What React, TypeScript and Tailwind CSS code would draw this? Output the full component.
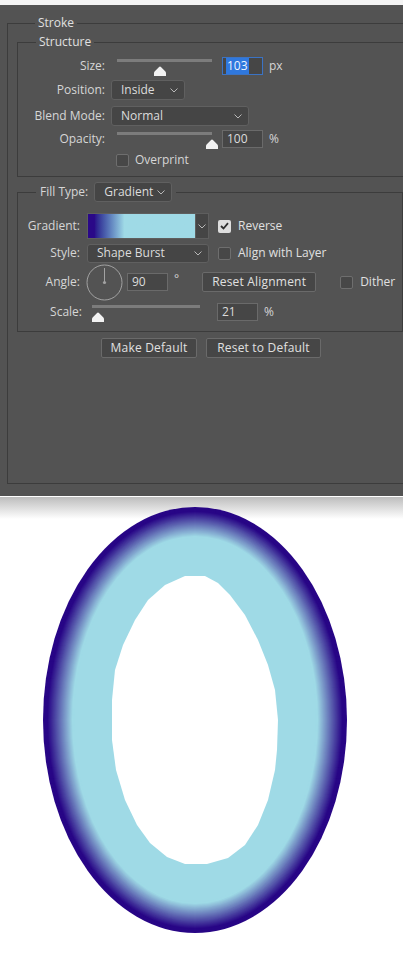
import React from 'react';

const font = "font-['Open_Sans',sans-serif]";

function Chevron() {
  return (
    <svg width="8" height="5" viewBox="0 0 8 5" className="shrink-0">
      <path d="M0.5 0.5 L4 4 L7.5 0.5" fill="none" stroke="#b8b8b8" strokeWidth="1" />
    </svg>
  );
}

function Thumb() {
  return (
    <svg width="12" height="10" viewBox="0 0 12 10">
      <path d="M6 0.5 Q6.6 0.5 7.2 1.2 L11.4 5.6 Q12 6.3 12 7.2 V10 H0 V7.2 Q0 6.3 0.6 5.6 L4.8 1.2 Q5.4 0.5 6 0.5 Z" fill="#f2f2f2" />
    </svg>
  );
}

function Slider({ width, pct }: { width: number; pct: number }) {
  return (
    <div className="relative h-[18px] shrink-0" style={{ width }}>
      <div className="mt-[4px] h-[3px] bg-[#7c7c7c]" />
      <div className="absolute top-[7px]" style={{ left: pct * width - 6 }}>
        <Thumb />
      </div>
    </div>
  );
}

function Select({ value, width, height = 20 }: { value: string; width: number; height?: number }) {
  return (
    <div
      className="flex items-center justify-between pl-[9px] pr-[6px] bg-[#454545] border border-[#606060] rounded-[3px] text-[#dcdcdc] shrink-0"
      style={{ width, height }}
    >
      <span>{value}</span>
      <Chevron />
    </div>
  );
}

function Field({ value, width = 41 }: { value: string; width?: number }) {
  return (
    <div
      className="flex items-center h-[18px] pl-[4px] bg-[#464646] border border-[#6a6a6a] text-[#dcdcdc] shrink-0"
      style={{ width }}
    >
      {value}
    </div>
  );
}

function Check({ checked = false }: { checked?: boolean }) {
  return checked ? (
    <div className="w-[13px] h-[13px] rounded-[2px] bg-[#dedede] flex items-center justify-center shrink-0">
      <svg width="9" height="8" viewBox="0 0 9 8">
        <path d="M1 4 L3.5 6.5 L8 1.2" fill="none" stroke="#2f2f2f" strokeWidth="1.8" />
      </svg>
    </div>
  ) : (
    <div className="w-[13px] h-[13px] rounded-[2px] bg-[#474747] border border-[#6e6e6e] shrink-0" />
  );
}

function Button({ label, width }: { label: string; width: number }) {
  return (
    <div
      className="flex items-center justify-center h-[20px] bg-[#464646] border border-[#6a6a6a] rounded-[2px] text-[#e0e0e0] tracking-[0.2px] shrink-0"
      style={{ width }}
    >
      {label}
    </div>
  );
}

function Dial() {
  return (
    <svg width="37" height="37" viewBox="0 0 37 37" className="shrink-0">
      <circle cx="18.5" cy="18.5" r="17.5" fill="none" stroke="#a2a2a2" strokeWidth="1" />
      <line x1="18.5" y1="18.5" x2="18.5" y2="4" stroke="#a2a2a2" strokeWidth="1" />
      <circle cx="18.5" cy="18.5" r="1.6" fill="#a2a2a2" />
    </svg>
  );
}

const dark = [40, 6, 134];
const light = [159, 218, 230];

function mix(t: number) {
  const c = dark.map((d, i) => Math.round(d + (light[i] - d) * t));
  return `rgb(${c[0]},${c[1]},${c[2]})`;
}

function Ring() {
  const steps = Array.from({ length: 32 }, (_, i) => i);
  const hole =
    'M185 80 L205 80 L218 87 L230 99 L245 119 L258 144 L268 169 L275 194 L278 224 L277 254 L275 274 L268 304 L258 329 L245 349 L228 362 L207 368 L185 368 L167 361 L150 347 L137 329 L125 304 L116 274 L112 244 L112 204 L115 174 L123 149 L135 124 L148 104 L165 89 Z';
  return (
    <svg width="403" height="467" viewBox="0 0 403 467" className="block">
      <defs>
        <linearGradient id="shade" x1="0" y1="0" x2="0" y2="1">
          <stop offset="0" stopColor="#bdbdbd" />
          <stop offset="1" stopColor="#ffffff" />
        </linearGradient>
      </defs>
      <rect x="0" y="0" width="403" height="467" fill="#ffffff" />
      <rect x="0" y="1" width="403" height="22" fill="url(#shade)" />
      {steps.map((d) => {
        const t = Math.min(1, Math.max(0, (d - 4) / 25));
        return <ellipse key={d} cx="195" cy="224" rx={152 - d} ry={213 - d} fill={mix(t)} />;
      })}
      <path d={hole} fill="#ffffff" />
    </svg>
  );
}

export default function App() {
  return (
    <div className={`w-[403px] h-[961px] overflow-hidden bg-white text-[12px] leading-[16px] ${font}`}>
      <div className="h-[5px] bg-[#f4f4f4]" />
      <div className="bg-[#535353] pt-[10px] pb-[12px] text-[#d6d6d6]">
        {/* Stroke */}
        <fieldset className="ml-[7px] w-[420px] border border-[#3c3c3c] pl-[9px] pb-[125px]">
          <legend className="ml-[18px] px-[3px] text-[#e0e0e0]">Stroke</legend>

          {/* Structure */}
          <fieldset className="mt-[3px] border border-[#3c3c3c] pt-[7px] pb-[9px]">
            <legend className="ml-[18px] px-[3px] text-[#e0e0e0]">Structure</legend>
            <div className="flex items-center h-[18px]">
              <span className="w-[87px] text-right">Size:</span>
              <div className="ml-[12px]">
                <Slider width={95} pct={0.45} />
              </div>
              <div className="ml-[10px] flex items-center h-[18px] w-[41px] pl-[3px] bg-[#464646] border border-[#3b73c4]">
                <span className="bg-[#2f78de] text-[#eef4ff] px-[1px]">103</span>
              </div>
              <span className="ml-[6px]">px</span>
            </div>
            <div className="mt-[5px] flex items-center h-[20px]">
              <span className="w-[87px] text-right">Position:</span>
              <div className="ml-[6px]">
                <Select value="Inside" width={74} />
              </div>
            </div>
            <div className="mt-[6px] flex items-center h-[20px]">
              <span className="w-[87px] text-right">Blend Mode:</span>
              <div className="ml-[6px]">
                <Select value="Normal" width={138} />
              </div>
            </div>
            <div className="mt-[4px] flex items-center h-[18px]">
              <span className="w-[87px] text-right">Opacity:</span>
              <div className="ml-[12px]">
                <Slider width={95} pct={1} />
              </div>
              <div className="ml-[10px]">
                <Field value="100" />
              </div>
              <span className="ml-[6px]">%</span>
            </div>
            <div className="mt-[5px] flex items-center h-[14px] pl-[98px]">
              <Check />
              <span className="ml-[6px]">Overprint</span>
            </div>
          </fieldset>

          {/* Fill Type */}
          <fieldset className="mt-[5px] w-[386px] border border-[#3c3c3c] pt-[11px] pb-[10px]">
            <legend className="ml-[18px] px-[4px]">
              <div className="flex items-center gap-[6px]">
                <span>Fill Type:</span>
                <Select value="Gradient" width={78} />
              </div>
            </legend>
            <div className="flex items-center h-[26px]">
              <span className="w-[62px] text-right">Gradient:</span>
              <div className="ml-[7px] flex h-[26px] w-[122px] border border-[#5e5e5e] bg-[#454545]">
                <div className="w-[107px] h-full bg-linear-to-r from-[#2a0888] from-[6%] to-[#9fdae6] to-[34%]" />
                <div className="flex-1 flex items-center justify-center border-l border-[#5e5e5e]">
                  <Chevron />
                </div>
              </div>
              <div className="ml-[9px]">
                <Check checked />
              </div>
              <span className="ml-[7px] text-[#e0e0e0]">Reverse</span>
            </div>
            <div className="mt-[5px] flex items-center h-[18px]">
              <span className="w-[62px] text-right">Style:</span>
              <div className="ml-[7px]">
                <Select value="Shape Burst" width={122} height={19} />
              </div>
              <div className="ml-[9px]">
                <Check />
              </div>
              <span className="ml-[7px] text-[#e0e0e0]">Align with Layer</span>
            </div>
            <div className="mt-[2px] flex items-center h-[36px]">
              <span className="w-[62px] text-right">Angle:</span>
              <div className="ml-[6px]">
                <Dial />
              </div>
              <div className="ml-[4px]">
                <Field value="90" width={41} />
              </div>
              <span className="ml-[6px] -mt-[6px]">°</span>
              <div className="ml-[23px]">
                <Button label="Reset Alignment" width={114} />
              </div>
              <div className="ml-[24px]">
                <Check />
              </div>
              <span className="ml-[7px] text-[#e0e0e0]">Dither</span>
            </div>
            <div className="mt-[3px] flex items-center h-[18px]">
              <span className="w-[64px] text-right">Scale:</span>
              <div className="ml-[10px]">
                <Slider width={108} pct={0.055} />
              </div>
              <div className="ml-[17px]">
                <Field value="21" width={41} />
              </div>
              <span className="ml-[6px]">%</span>
            </div>
          </fieldset>

          <div className="mt-[6px] ml-[84px] flex gap-[9px]">
            <Button label="Make Default" width={96} />
            <Button label="Reset to Default" width={115} />
          </div>
        </fieldset>
      </div>
      <Ring />
    </div>
  );
}
